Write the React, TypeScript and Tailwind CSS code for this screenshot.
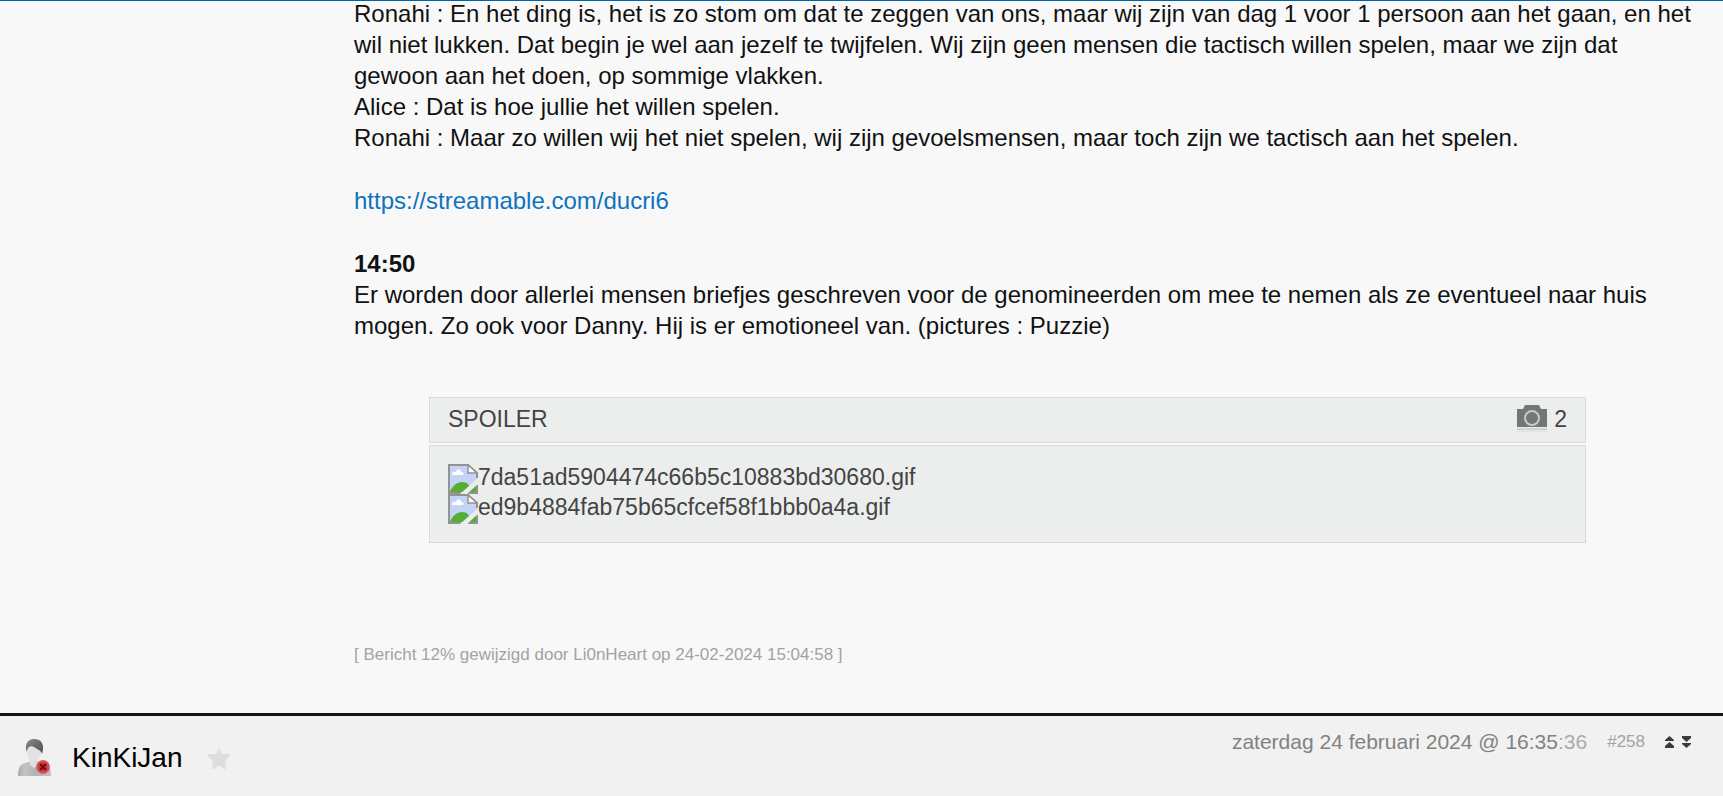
const attachments = [
  "7da51ad5904474c66b5c10883bd30680.gif",
  "ed9b4884fab75b65cfcef58f1bbb0a4a.gif",
];

const BrokenImageIcon = () => (
  <svg viewBox="0 0 30 30" className="size-[30px] shrink-0" aria-hidden="true">
    <path d="M1 1H20L29 9V29H1Z" fill="#c3d4f6" />
    <path d="M4 11C4 8 6 7 8 8C9 4 13 5 13 8C16 8 16 10 15 11Z" fill="#fff" />
    <path d="M2 28C4 22 9 18 14 18C19 18 22 21 24 28Z" fill="#57ad35" />
    <path d="M20 28L28 21V28Z" fill="#57ad35" />
    <path
      d="M29 14V9L20 1H1V29H13M29 21V29H20"
      fill="none"
      stroke="#939393"
      strokeWidth="2"
    />
    <path d="M20 1V9H29Z" fill="#fff" stroke="#939393" strokeWidth="1.5" />
    <path d="M30 14L12 30H19L30 20Z" fill="#eceeed" />
  </svg>
);

const CameraIcon = () => (
  <svg viewBox="0 0 30 28" className="h-7 w-[30px]" aria-hidden="true">
    <path d="M0 23H30V25H0Z" fill="#d3d5d4" />
    <path d="M0 25H30V27H0Z" fill="#e2e4e3" />
    <path d="M0 4H6L8 0H22L24 4H30V22H0Z" fill="#757776" />
    <circle cx="15" cy="13" r="7" fill="none" stroke="#c9cbca" strokeWidth="2" />
  </svg>
);

const UserIcon = () => (
  <svg viewBox="0 0 34 38" className="h-[38px] w-[34px]" aria-hidden="true">
    <defs>
      <linearGradient id="body" x1="0" x2="1">
        <stop offset="0" stopColor="#a9a9a9" />
        <stop offset="0.2" stopColor="#c4c4c4" />
        <stop offset="0.5" stopColor="#b4b4b4" />
        <stop offset="1" stopColor="#c2c2c2" />
      </linearGradient>
      <linearGradient id="hair" x1="0" x2="1" y1="0" y2="1">
        <stop offset="0" stopColor="#8a8a8a" />
        <stop offset="1" stopColor="#4e4e4e" />
      </linearGradient>
      <radialGradient id="badge">
        <stop offset="0" stopColor="#b5262a" />
        <stop offset="0.6" stopColor="#d63a3d" />
        <stop offset="1" stopColor="#dc6466" />
      </radialGradient>
    </defs>
    <path d="M0 37C0 27 3 24 11 23H23C30 24 33 28 33 37Z" fill="url(#body)" />
    <path d="M11 20H21L20 26L16 29L12 26Z" fill="#dedede" />
    <ellipse cx="16" cy="13" rx="7" ry="9" fill="#e2e2e2" />
    <path
      d="M9 13C6 7 9 0 16 0C24 0 27 6 24 15C23 11 20 11 16 8C13 6 9 8 9 13Z"
      fill="url(#hair)"
    />
    <circle cx="25" cy="28" r="7" fill="url(#badge)" />
    <path d="M22 25L28 31M28 25L22 31" stroke="#5d1416" strokeWidth="2" />
  </svg>
);

const StarIcon = () => (
  <svg viewBox="0 0 24 24" className="size-6" aria-hidden="true">
    <path
      d="M12 1L15 8H23V10L18 15L19 23H17L12 19L7 23H5L6 15L1 10V8H9Z"
      fill="#dddddd"
    />
    <circle cx="12" cy="4" r="1" fill="#f1f1f1" />
  </svg>
);

const JumpIcon = ({ flipped }: { flipped?: boolean }) => (
  <svg
    viewBox="0 0 9 12"
    className={flipped ? "h-3 w-[9px] rotate-180" : "h-3 w-[9px]"}
    aria-hidden="true"
  >
    <path d="M4.5 0L9 4V5H0V4ZM4.5 6L9 10V12H0V10Z" fill="#3c3c3c" />
  </svg>
);

const Spoiler = () => (
  <section className="ml-[75px] mr-[131px] mt-14 text-[23px] leading-[30px] text-[#444]">
    <div className="flex h-[46px] items-start justify-between border border-[#d8dbda] bg-[#eceeed] px-[18px] py-1.5">
      <h2>SPOILER</h2>
      <div className="flex items-center gap-[7px]">
        <CameraIcon />
        <span>2</span>
      </div>
    </div>
    <ul className="mt-0.5 border border-[#d8dbda] bg-[#eceeed] px-[18px] py-[18px]">
      {attachments.map((name) => (
        <li key={name} className="flex">
          <BrokenImageIcon />
          <span className="-mt-0.5">{name}</span>
        </li>
      ))}
    </ul>
  </section>
);

export default function App() {
  return (
    <div className="min-h-screen bg-[#f8f8f8] font-['Liberation_Sans',Arial,sans-serif] text-[#111]">
      <article className="border-t border-[#0063a6] pb-12 pl-[354px] pr-1.5">
        <div className="-mt-[3px] text-2xl leading-[31px]">
          <p>
            Ronahi : En het ding is, het is zo stom om dat te zeggen van ons, maar wij zijn van dag 1
            voor 1 persoon aan het gaan, en het
            <br />
            wil niet lukken. Dat begin je wel aan jezelf te twijfelen. Wij zijn geen mensen die
            tactisch willen spelen, maar we zijn dat
            <br />
            gewoon aan het doen, op sommige vlakken.
            <br />
            Alice : Dat is hoe jullie het willen spelen.
            <br />
            Ronahi : Maar zo willen wij het niet spelen, wij zijn gevoelsmensen, maar toch zijn we
            tactisch aan het spelen.
          </p>
          <p className="mt-8">
            <a href="https://streamable.com/ducri6" className="text-[#0f73bd]">
              https://streamable.com/ducri6
            </a>
          </p>
          <p className="mt-8">
            <b>14:50</b>
            <br />
            Er worden door allerlei mensen briefjes geschreven voor de genomineerden om mee te nemen
            als ze eventueel naar huis
            <br />
            mogen. Zo ook voor Danny. Hij is er emotioneel van. (pictures : Puzzie)
          </p>
        </div>
        <Spoiler />
        <p className="mt-[102px] text-[17px] leading-5 text-[#a3a3a3]">
          [ Bericht 12% gewijzigd door Li0nHeart op 24-02-2024 15:04:58 ]
        </p>
      </article>

      <header className="flex justify-between border-t-[3px] border-[#161414] bg-[#f1f1f1] pb-5 pl-[18px] pr-8">
        <div className="flex items-center pt-[23px]">
          <UserIcon />
          <a href="#kinkijan" className="ml-5 text-[28px] leading-9 text-black">
            KinKiJan
          </a>
          <button type="button" aria-label="Favoriet" className="ml-6">
            <StarIcon />
          </button>
        </div>
        <div className="flex items-center self-start pt-3 leading-7 text-[#828282]">
          <time className="text-[21px]">
            zaterdag 24 februari 2024 @ 16:35<span className="text-[#ababab]">:36</span>
          </time>
          <a href="#258" className="ml-5 text-[17px] text-[#a3a3a3]">
            #258
          </a>
          <button type="button" aria-label="Naar boven" className="ml-5">
            <JumpIcon />
          </button>
          <button type="button" aria-label="Naar beneden" className="ml-2">
            <JumpIcon flipped />
          </button>
        </div>
      </header>
    </div>
  );
}
